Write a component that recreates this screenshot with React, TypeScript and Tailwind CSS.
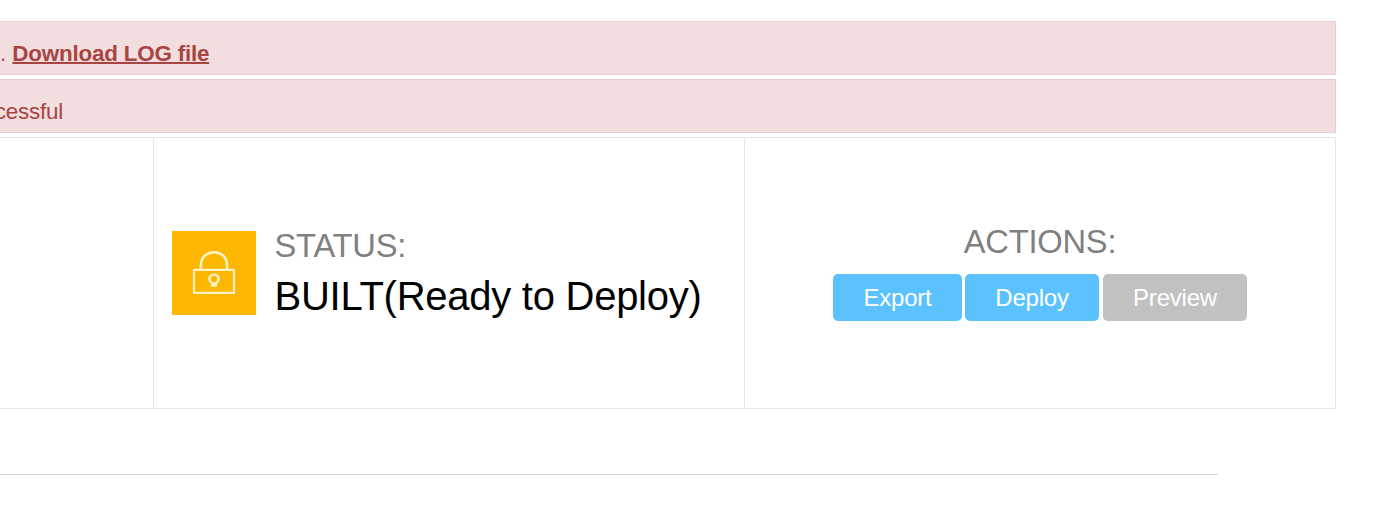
import type { ReactNode } from "react";

function Alert({ children }: { children: ReactNode }) {
  return (
    <div className="flex h-[54px] w-[1336px] items-center whitespace-pre border border-l-0 border-[#ebccd1] bg-[#f2dede] pt-[11px] text-[22.4px] leading-[31px] text-[#a94442]">
      {children}
    </div>
  );
}

function LockIcon() {
  return (
    <svg viewBox="0 0 84 84" className="size-[84px] shrink-0 bg-[#fdb700]" fill="none" stroke="#fff1c4" strokeWidth="2.2">
      <rect x="22" y="38.9" width="40" height="23" rx="0.5" />
      <path d="M28.9 38V34.5C28.9 26.3 34.7 21.2 42 21.2S55.1 26.3 55.1 34.5V38" strokeWidth="2.6" />
      <circle cx="42" cy="48" r="4.5" strokeWidth="2.6" />
      <path d="M40.6 52.5L39.6 55H44.4L43.4 52.5Z" fill="#fff1c4" strokeWidth="1.6" />
    </svg>
  );
}

export default function App() {
  return (
    <div className="h-[529px] w-[1398px] overflow-hidden bg-white pt-[21px] font-['Liberation_Sans',Arial,sans-serif] tracking-[-0.22px]">
      <div className="flex flex-col gap-1">
        <Alert>
          <span>. </span>
          <a href="#" className="ml-[0.3px] font-bold tracking-[-0.2px] underline decoration-2 underline-offset-[1px]">Download LOG file</a>
        </Alert>
        <Alert>
          <span className="-ml-[5.2px]">cessful</span>
        </Alert>
        <div className="flex h-[272px] w-[1336px] border border-l-0 border-[#e5e5e5]">
          <div className="w-[154px] border-r border-[#e5e5e5]" />
          <div className="flex w-[591px] items-center border-r border-[#e5e5e5] pl-[18px]">
            <LockIcon />
            <div className="ml-[18.5px] whitespace-nowrap">
              <div className="pt-px text-[32.7px] leading-[46px] text-[#808080]">STATUS:</div>
              <div className="text-[40px] leading-[55px] tracking-[-0.26px] text-black">BUILT(Ready to Deploy)</div>
            </div>
          </div>
          <div className="flex flex-1 flex-col items-center pt-[81px]">
            <div className="text-[32.7px] leading-[46px] text-[#808080]">ACTIONS:</div>
            <div className="mt-[9px] flex text-[24px] leading-[47px] text-white">
              <button className="h-[47px] w-[129px] rounded-[5px] bg-[#5bc2ff]">Export</button>
              <button className="ml-[3px] h-[47px] w-[134px] rounded-[5px] bg-[#5bc2ff]">Deploy</button>
              <button className="ml-[4px] h-[47px] w-[144px] rounded-[5px] bg-[#c1c1c1]">Preview</button>
            </div>
          </div>
        </div>
      </div>
      <div className="mt-[65px] h-px w-[1218px] bg-[#d2d2dc]" />
    </div>
  );
}
